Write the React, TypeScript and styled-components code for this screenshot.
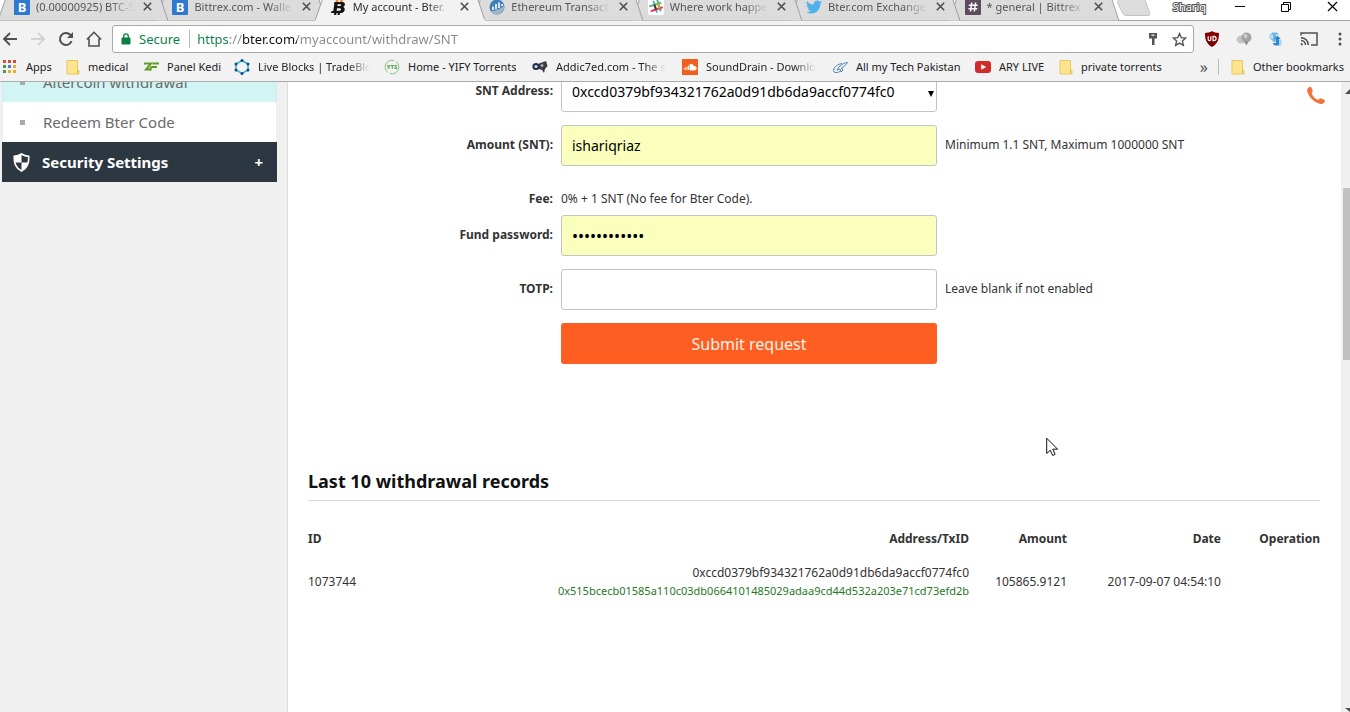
import React from "react";
import styled, { createGlobalStyle, css } from "styled-components";

const GlobalStyle = createGlobalStyle`
  *, *::before, *::after { box-sizing: border-box; }
  html, body, #root { height: 100%; }
  body {
    margin: 0;
    overflow: hidden;
    background: #fff;
    color: #333;
    font-family: "Noto Sans", "Open Sans", sans-serif;
    font-size: 12px;
    line-height: 18px;
  }
  button, input, select { font-family: inherit; margin: 0; }
  a { color: inherit; text-decoration: none; }
  svg { display: block; flex: none; }
`;

const Window = styled.div`
  display: flex;
  flex-direction: column;
  height: 100vh;
  overflow: hidden;
`;

const IconButton = styled.button`
  display: flex;
  align-items: center;
  justify-content: center;
  padding: 0;
  border: 0;
  background: none;
  color: #4d4d4d;
`;

/* ---------- Tab strip ---------- */

const TabStrip = styled.div`
  display: flex;
  flex: none;
  height: 29px;
  margin-top: -8px;
  background: #fff;
  border-bottom: 1px solid #a3a3a3;
  font-size: 11px;
`;

const TabList = styled.div`
  display: flex;
  flex: 0 1 1109px;
  min-width: 0;
`;

const Tab = styled.div<{ $active?: boolean; $order: number }>`
  position: relative;
  z-index: ${(p) => (p.$active ? 20 : p.$order)};
  display: flex;
  flex: 1 1 0;
  min-width: 0;
  height: 29px;
  padding: 0 6px 0 14px;
  align-items: center;
  gap: 6px;
  color: ${(p) => (p.$active ? "#2b2b2b" : "#555")};
`;

const TabShape = styled.svg`
  position: absolute;
  z-index: -1;
  top: 0;
  left: -2px;
  width: calc(100% + 12px);
  height: 29px;
`;

const TabTitle = styled.a`
  flex: 1;
  min-width: 0;
  overflow: hidden;
  white-space: nowrap;
  mask-image: linear-gradient(to right, #000 calc(100% - 24px), transparent);
`;

const TabClose = styled(IconButton)`
  width: 9px;
  height: 9px;
  margin-left: 3px;
`;

const NewTab = styled(IconButton)`
  align-items: flex-start;
  margin: 8px 0 0 8px;
`;

const WindowControls = styled.div`
  display: flex;
  flex: 1;
  justify-content: flex-end;
  align-items: center;
  height: 29px;
  padding-right: 12px;
  color: #000;
`;

const UserName = styled.span`
  margin-right: 28px;
  color: #fff;
  -webkit-text-stroke: 2px #555;
  paint-order: stroke fill;
`;

const ControlButton = styled(IconButton)`
  width: 12px;
  height: 12px;
  color: #000;
  & + & { margin-left: 34px; }
`;

/* ---------- Toolbar ---------- */

const Toolbar = styled.div`
  display: flex;
  flex: none;
  align-items: center;
  height: 32px;
  padding: 4px 4px 0 2px;
  background: #f2f2f2;
`;

const NavButtons = styled.div`
  display: flex;
  gap: 12px;
  width: 110px;
`;

const Omnibox = styled.div`
  display: flex;
  flex: 1;
  align-items: center;
  height: 28px;
  padding: 0 6px 0 8px;
  background: #fff;
  border: 1px solid #a9a9a9;
  border-radius: 3px;
`;

const Secure = styled.span`
  padding: 0 9px 0 8px;
  border-right: 1px solid #bbb;
  font-size: 13px;
  color: #0b8043;
`;

const UrlInput = styled.input`
  flex: 1;
  min-width: 0;
  height: 20px;
  padding: 0;
  margin-left: 7px;
  border: 0;
  outline: 0;
  font-size: 13px;
  color: transparent;
  background: linear-gradient(to right, #0b8043 32px, #888 32px, #888 45px, #111 45px, #111 100px, #888 100px);
  background-clip: text;
  -webkit-background-clip: text;
`;

const OmniActions = styled.div`
  display: flex;
  align-items: center;
  gap: 14px;
`;

const Extensions = styled.div`
  display: flex;
  align-items: center;
  gap: 16px;
  margin-left: 10px;
`;

/* ---------- Bookmarks ---------- */

const BookmarkBar = styled.nav`
  display: flex;
  flex: none;
  align-items: center;
  height: 29px;
  padding-left: 2px;
  padding-right: 6px;
  background: #f2f2f2;
  border-bottom: 1px solid #acacac;
  color: #222;
  font-size: 11px;
`;

const BookmarkList = styled.div`
  display: grid;
  flex: 1;
  grid-template-columns: 64px 77px 91px 150px 148px 150px 150px 143px 84px 1fr;
`;

const Bookmark = styled.a`
  display: flex;
  align-items: center;
  gap: 8px;
  min-width: 0;
`;

const BookmarkLabel = styled.span<{ $fade?: boolean }>`
  overflow: hidden;
  max-width: 112px;
  white-space: nowrap;
  ${(p) => p.$fade && css`mask-image: linear-gradient(to right, #000 calc(100% - 22px), transparent);`}
`;

const BookmarkMore = styled(IconButton)`
  height: 16px;
  width: 20px;
  padding-right: 4px;
  margin-right: 12px;
  box-sizing: content-box;
  border-right: 1px solid #bbb;
  font-size: 16px;
`;

/* ---------- Page ---------- */

const Viewport = styled.div`
  position: relative;
  display: flex;
  flex: 1;
  min-height: 0;
  overflow: hidden;
`;

const Sidebar = styled.aside`
  flex: none;
  width: 288px;
  padding: 0 10px 0 2px;
  background: #f0f0f0;
  border-right: 1px solid #dcdcdc;
`;

const SideMenu = styled.nav`
  margin-top: -20px;
`;

const SideLink = styled.a<{ $current?: boolean }>`
  display: flex;
  align-items: center;
  gap: 18px;
  height: 40px;
  padding-left: 17px;
  border: 1px solid ${(p) => (p.$current ? "#c9eeee" : "#eee")};
  border-width: 0 1px;
  background: ${(p) => (p.$current ? "#d2f4f4" : "#fff")};
  color: #6b6b6b;
  font-size: 15px;

  &::before {
    content: "";
    width: 5px;
    height: 5px;
    background: #a9a9a9;
  }
`;

const SideHeading = styled.button`
  display: flex;
  align-items: center;
  gap: 12px;
  width: 100%;
  height: 40px;
  padding: 0 14px 0 11px;
  border: 0;
  background: #2d3741;
  color: #fff;
  font-size: 15px;
  font-weight: 700;
  text-align: left;
`;

const SideHeadingText = styled.span`
  flex: 1;
`;

const Main = styled.main`
  flex: 1;
  min-width: 0;
  padding: 0 21px 0 20px;
`;

const Form = styled.form`
  margin-top: -11px;
`;

const Row = styled.div<{ $plain?: boolean }>`
  display: grid;
  grid-template-columns: 245px 376px 1fr;
  column-gap: 8px;
  align-items: center;
  min-height: ${(p) => (p.$plain ? 36 : 41)}px;
  padding-top: ${(p) => (p.$plain ? 6 : 0)}px;
  margin-bottom: ${(p) => (p.$plain ? 0 : 13)}px;
`;

const Label = styled.label`
  padding-bottom: 2px;
  text-align: right;
  font-weight: 700;
`;

const Note = styled.span`
  padding-bottom: 2px;
`;

const fieldStyle = css`
  width: 100%;
  height: 41px;
  padding: 0 10px;
  border: 1px solid #c4c4c4;
  border-radius: 3px;
  outline: 0;
  color: #000;
  font-size: 14px;
`;

const Field = styled.input<{ $filled?: boolean }>`
  ${fieldStyle}
  background: ${(p) => (p.$filled ? "#faffbd" : "#fff")};
  &[type="password"] { font-size: 16px; }
`;

const SelectWrap = styled.div`
  position: relative;
`;

const Select = styled.select`
  ${fieldStyle}
  appearance: none;
  background: #fff;
`;

const SelectArrow = styled.svg`
  position: absolute;
  right: 3px;
  top: 20px;
  pointer-events: none;
`;

const SubmitButton = styled.button`
  grid-column: 2;
  height: 41px;
  border: 0;
  border-radius: 3px;
  background: #ff5e22;
  color: #fff3e6;
  font-size: 16px;
`;

const Heading = styled.h2`
  margin: 104px 0 0;
  padding: 0 0 6px;
  border-bottom: 1px solid #d3d8d8;
  color: #111;
  font-size: 18px;
  font-weight: 700;
  line-height: 26px;
`;

const Table = styled.table`
  width: 100%;
  margin-top: 24px;
  table-layout: fixed;
  border-collapse: collapse;
`;

const cell = css<{ $w?: number }>`
  width: ${(p) => (p.$w ? `${p.$w}px` : "auto")};
  padding: 0;
  text-align: right;
  &:first-child { text-align: left; }
`;

const Th = styled.th<{ $w?: number }>`
  ${cell}
  height: 28px;
`;

const Td = styled.td<{ $w?: number }>`
  ${cell}
  height: 58px;
`;

const TxLink = styled.a`
  display: block;
  color: #1f7a1f;
  font-size: 11px;
`;

const PhoneLink = styled.a`
  position: absolute;
  top: 4px;
  right: 24px;
`;

const ScrollTrack = styled.div`
  display: flex;
  flex: none;
  flex-direction: column;
  align-items: flex-end;
  width: 9px;
  padding-top: 7px;
  background: #f0f0f0;
`;

const ScrollThumb = styled.div`
  width: 7px;
  height: 172px;
  margin: 94px 0 auto;
  background: #c1c1c1;
`;

const Pointer = styled.svg`
  position: absolute;
  top: 355px;
  left: 1046px;
`;

/* ---------- Icons ---------- */

const BittrexIcon = () => (
  <svg width="16" height="16" viewBox="0 0 16 16" aria-hidden="true">
    <rect width="16" height="16" rx="1" fill="#2f78cf" />
    <text x="8" y="13" textAnchor="middle" fontSize="13" fontWeight="700" fill="#fff">B</text>
  </svg>
);

const BterIcon = () => (
  <svg width="16" height="16" viewBox="0 0 16 16" aria-hidden="true">
    <path d="M5 0h2.500L7 4H4.500zM9.500 0H12l-.5 4H9z" fill="#f08a24" />
    <path d="M3.500 3H11c3.500 0 3.800 3.700 1.200 4.900C15 9 14 14 9.500 14H9l-.3 2H6.500l.3-2H5.500l-.3 2H3l.3-2H0l.6-2h1.700l1-6.800H2.800zM6.700 5.200l-.3 1.900H9c1.500 0 1.600-1.900.2-1.900zM6 9.300l-.4 2.400h3c1.900 0 2-2.400.3-2.400z" fill="#111" />
  </svg>
);

const EtherscanIcon = () => (
  <svg width="16" height="16" viewBox="0 0 16 16" aria-hidden="true">
    <circle cx="8" cy="8" r="7.500" fill="#3f7fb5" />
    <path d="M1.200 12C6 12.500 11 10 15.400 6.500 15.500 12 12 15.500 8 15.500c-3 0-5.500-1.400-6.800-3.500z" fill="#9fb4c4" />
    <path d="M4 11V7.500M7 10.500V5M10 9V3.500M13 7V5" stroke="#fff" strokeWidth="1.600" />
  </svg>
);

const SlackIcon = () => (
  <svg width="16" height="16" viewBox="0 0 16 16" aria-hidden="true">
    <rect width="16" height="16" rx="2" fill="#fff" />
    <g strokeWidth="2" strokeLinecap="round">
      <path d="M5.500 2.500 8.800 13" stroke="#58b9c4" />
      <path d="M9.500 1.800 12.500 11.500" stroke="#3eb890" />
      <path d="M2 7.300 12.500 4" stroke="#63b48c" />
      <path d="M3.500 12 14 8.500" stroke="#e0405f" />
      <path d="m6.600 6.300 1.200 3.500" stroke="#54303a" />
      <path d="m10 5.300 1.200 3.500" stroke="#e9a820" />
    </g>
  </svg>
);

const TwitterIcon = () => (
  <svg width="16" height="16" viewBox="0 0 24 24" aria-hidden="true">
    <path fill="#4fb0ea" d="M24 4.600a10 10 0 0 1-2.800.8 4.900 4.900 0 0 0 2.100-2.700c-1 .6-2 1-3.100 1.200a4.900 4.900 0 0 0-8.400 4.500A14 14 0 0 1 1.700 3.200a4.900 4.900 0 0 0 1.500 6.500c-.8 0-1.600-.2-2.200-.6v.1a4.900 4.900 0 0 0 3.900 4.800 5 5 0 0 1-2.200.1 4.900 4.900 0 0 0 4.600 3.400A9.900 9.900 0 0 1 0 19.500 14 14 0 0 0 7.500 21.700c9.100 0 14-7.500 14-14v-.6A10 10 0 0 0 24 4.600z" />
  </svg>
);

const HashIcon = () => (
  <svg width="16" height="16" viewBox="0 0 16 16" aria-hidden="true">
    <rect width="16" height="16" rx="1" fill="#5d4b5e" />
    <path d="M6.800 3.500 5.500 12.500M10.600 3.500 9.300 12.500M3.800 6.300h8.800M3.400 9.700h8.800" stroke="#fff" strokeWidth="1.500" />
  </svg>
);

const CloseIcon = ({ size = 9, weight = 1.6 }: { size?: number; weight?: number }) => (
  <svg width={size} height={size} viewBox="0 0 9 9" aria-hidden="true">
    <path d="m.8.8 7.400 7.400M8.200.8.8 8.200" stroke="currentColor" strokeWidth={weight} />
  </svg>
);

const Folder = () => (
  <svg width="14" height="16" viewBox="0 0 14 16" aria-hidden="true">
    <path d="M1 1.500h10.500v10H13V15H1z" fill="#fde58c" stroke="#e7c765" />
    <path d="M11.500 11v3.500" stroke="#d9b855" />
  </svg>
);

const AppsIcon = () => (
  <svg width="16" height="14" viewBox="0 0 16 14" aria-hidden="true">
    {["#d9483b", "#d9483b", "#d9483b", "#3f9b57", "#4a7de0", "#e9ae2c", "#3f9b57", "#e9ae2c", "#e9ae2c"].map((c, i) => (
      <rect key={i} x={1 + (i % 3) * 5} y={Math.floor(i / 3) * 5} width="3" height="3" fill={c} />
    ))}
  </svg>
);

const KediIcon = () => (
  <svg width="16" height="16" viewBox="0 0 16 16" aria-hidden="true">
    <path d="M1 4.500h7L3 10.500h5.500" fill="none" stroke="#5f9e22" strokeWidth="2" />
    <path d="M9.500 4.500H16M8.500 8h5.500M8.300 7.500l-1.300 4" fill="none" stroke="#5f9e22" strokeWidth="2" />
  </svg>
);

const BlocksIcon = () => (
  <svg width="16" height="16" viewBox="0 0 16 16" aria-hidden="true">
    <path d="M8 1.500 14 5v6l-6 3.500L2 11V5z" fill="none" stroke="#35b4d8" strokeWidth="1.500" />
    {[[8, 1.5], [14, 5], [14, 11], [8, 14.5], [2, 11], [2, 5]].map(([x, y]) => (
      <circle key={`${x}-${y}`} cx={x} cy={y} r="1.500" fill="#194a75" />
    ))}
  </svg>
);

const YtsIcon = () => (
  <svg width="16" height="16" viewBox="0 0 16 16" aria-hidden="true">
    <path d="M10 1.500A6.800 6.800 0 0 0 4 13.500M6 14.500A6.800 6.800 0 0 0 12 2.500" fill="none" stroke="#82c67b" />
    <text x="8" y="10" textAnchor="middle" fontSize="6" fontWeight="700" fill="#3f9a3a">YTS</text>
  </svg>
);

const AddictedIcon = () => (
  <svg width="16" height="16" viewBox="0 0 16 16" aria-hidden="true">
    <path d="M7 4.500 14 2l1.500 5L13 10l-1 4-2-3-3-1z" fill="#3c3c44" />
    <circle cx="4" cy="7.500" r="3.600" fill="#1e2c4d" />
    <circle cx="4" cy="7.500" r="1.600" fill="#d4dcec" />
    <circle cx="10" cy="6.500" r="1.500" fill="#aaa" />
  </svg>
);

const SoundDrainIcon = () => (
  <svg width="16" height="16" viewBox="0 0 16 16" aria-hidden="true">
    <rect width="16" height="16" fill="#f0601c" />
    <path d="M8 5.500a3 3 0 0 1 4 2.200 1.700 1.700 0 1 1 .5 3.300H8zM6.500 6.500v4.500M5 7.500V11M3.500 8.200V11M2.200 9v1.500" fill="#fff" stroke="#fff" strokeWidth=".9" />
  </svg>
);

const TechIcon = () => (
  <svg width="16" height="16" viewBox="0 0 16 16" aria-hidden="true">
    <path d="M8 12.500c-4 2-7 1-6.500-1.500C2 8 6 5 10 4.500M5 11c2-4 6-7 10.500-7.500-2 3-4 4.500-6 5.500l1.500 2-2 2-1-3z" fill="none" stroke="#4b86bb" />
  </svg>
);

const YoutubeIcon = () => (
  <svg width="16" height="12" viewBox="0 0 16 12" aria-hidden="true">
    <rect width="16" height="12" rx="3" fill="#d32b2b" />
    <path d="m6.200 3.200 5 2.800-5 2.800z" fill="#fff" />
  </svg>
);

const BackIcon = ({ faded }: { faded?: boolean }) => (
  <svg width="16" height="16" viewBox="0 0 16 16" aria-hidden="true">
    <path
      d={faded ? "M1 8h13M8 2l6 6-6 6" : "M15 8H2M8 2 2 8l6 6"}
      fill="none"
      stroke={faded ? "#d2d2d2" : "#505050"}
      strokeWidth="1.800"
    />
  </svg>
);

const ReloadIcon = () => (
  <svg width="16" height="16" viewBox="0 0 16 16" aria-hidden="true">
    <path d="M13.600 10A6 6 0 1 1 12.300 3.800L14 5.500" fill="none" stroke="#505050" strokeWidth="2" />
    <path d="M15 1v6H9z" fill="#505050" />
  </svg>
);

const HomeIcon = () => (
  <svg width="16" height="16" viewBox="0 0 16 16" aria-hidden="true">
    <path d="M.8 8.500 8 1.300l7.200 7.200M3 7.500V15h10V7.500" fill="none" stroke="#505050" strokeWidth="1.600" />
  </svg>
);

const LockIcon = () => (
  <svg width="10" height="12" viewBox="0 0 10 12" aria-hidden="true">
    <rect x=".5" y="4.500" width="9" height="7" rx="1" fill="#0b8043" />
    <path d="M2.700 5V3.200a2.300 2.300 0 0 1 4.600 0V5" fill="none" stroke="#0b8043" strokeWidth="1.300" />
  </svg>
);

const KeyIcon = () => (
  <svg width="10" height="14" viewBox="0 0 10 14" aria-hidden="true">
    <path d="M1 1h8v5.500H6.500V13h-2.500V6.500H1z" fill="#555" />
    <path d="M3.500 3.200h3" stroke="#fff" strokeWidth="1.200" />
  </svg>
);

const StarIcon = () => (
  <svg width="15" height="15" viewBox="0 0 15 15" aria-hidden="true">
    <path d="m7.500 1.500 1.800 4.100 4.400.4-3.300 3 1 4.400-3.900-2.300-3.900 2.300 1-4.400-3.300-3 4.400-.4z" fill="none" stroke="#505050" strokeWidth="1.300" />
  </svg>
);

const UblockIcon = () => (
  <svg width="16" height="16" viewBox="0 0 16 16" aria-hidden="true">
    <path d="M8 0c2 1.400 4.500 1.900 7 2 0 6-1 10.500-7 14C2 12.500 1 8 1 2c2.500-.1 5-.6 7-2z" fill="#800000" />
    <path d="M4.200 5.300v3.200q0 1.200 1.300 1.200t1.300-1.200V5.300M9 9.600V5.400h.8q2.300 0 2.300 2.100t-2.300 2.100z" fill="none" stroke="#fff" strokeWidth="1.200" />
  </svg>
);

const BalloonIcon = () => (
  <svg width="16" height="16" viewBox="0 0 16 16" aria-hidden="true">
    <ellipse cx="5.500" cy="8.500" rx="5" ry="4" fill="#c4c4c4" />
    <circle cx="10.500" cy="6.500" r="5" fill="#a3a3a3" />
    <circle cx="9.500" cy="5" r="2" fill="#cfcfcf" />
    <path d="m8 10.500 2.500 4 2-4z" fill="#8b8b8b" />
  </svg>
);

const SyncIcon = () => (
  <svg width="16" height="16" viewBox="0 0 16 16" aria-hidden="true">
    <path d="M2 3.500 4.500 1.500H9l2 2H8v4h2l-3.500 4L2.500 8H5V4z" fill="#6db7ea" />
    <path d="M9.500 4.500 13 8h-2v3.500h1.500V13l-2 1.500H6.500l-2-2.500H8V8H6z" fill="#2f86cd" />
    <path d="M1.500 3h3v5h-3zM11 9h2.500v5.500H11z" fill="#a9d5f3" />
  </svg>
);

const CastIcon = () => (
  <svg width="18" height="14" viewBox="0 0 18 14" aria-hidden="true">
    <path d="M1 3.500V1h16v12h-6M1 5.700A7.300 7.300 0 0 1 8.300 13M1 8.400A4.600 4.600 0 0 1 5.600 13" fill="none" stroke="#505050" strokeWidth="1.500" />
    <path d="M.8 10.800A2.300 2.300 0 0 1 3 13.200H.8z" fill="#505050" />
  </svg>
);

const DotsIcon = () => (
  <svg width="12" height="14" viewBox="0 0 12 14" aria-hidden="true">
    <g fill="#505050">
      <circle cx="6" cy="2" r="1.500" />
      <circle cx="6" cy="7" r="1.500" />
      <circle cx="6" cy="12" r="1.500" />
    </g>
  </svg>
);

const ShieldIcon = () => (
  <svg width="17" height="19" viewBox="0 0 17 19" aria-hidden="true">
    <path d="M8.500 1C6.500 2.500 4 3.300 1.200 3.400c0 7 1.300 11.600 7.300 14.600 6-3 7.300-7.600 7.300-14.600C13 3.300 10.500 2.500 8.500 1z" fill="none" stroke="#fff" strokeWidth="1.600" />
    <path d="M8.500 1v8.500H1.600C1.200 7.700 1.200 5.700 1.200 3.400 4 3.300 6.500 2.500 8.500 1zM8.500 9.500h6.900c-.7 4-2.700 6.700-6.900 8.500z" fill="#fff" />
  </svg>
);

/* ---------- Data ---------- */

const tabs = [
  { title: "(0.00000925) BTC-S", icon: <BittrexIcon /> },
  { title: "Bittrex.com - Walle", icon: <BittrexIcon /> },
  { title: "My account - Bter.", icon: <BterIcon />, active: true },
  { title: "Ethereum Transact", icon: <EtherscanIcon /> },
  { title: "Where work happe", icon: <SlackIcon /> },
  { title: "Bter.com Exchange", icon: <TwitterIcon /> },
  { title: "* general | Bittrex S", icon: <HashIcon /> },
];

const bookmarks = [
  { label: "Apps", icon: <AppsIcon /> },
  { label: "medical", icon: <Folder /> },
  { label: "Panel Kedi", icon: <KediIcon /> },
  { label: "Live Blocks | TradeBlo", icon: <BlocksIcon />, fade: true },
  { label: "Home - YIFY Torrents", icon: <YtsIcon /> },
  { label: "Addic7ed.com - The s", icon: <AddictedIcon />, fade: true },
  { label: "SoundDrain - Downlo", icon: <SoundDrainIcon />, fade: true },
  { label: "All my Tech Pakistan", icon: <TechIcon /> },
  { label: "ARY LIVE", icon: <YoutubeIcon /> },
  { label: "private torrents", icon: <Folder /> },
];

const records = [
  {
    id: "1073744",
    address: "0xccd0379bf934321762a0d91db6da9accf0774fc0",
    tx: "0x515bcecb01585a110c03db0664101485029adaa9cd44d532a203e71cd73efd2b",
    amount: "105865.9121",
    date: "2017-09-07 04:54:10",
  },
];

export default function App() {
  return (
    <Window>
      <GlobalStyle />

      <TabStrip>
        <TabList>
          {tabs.map((t, i) => (
            <Tab key={t.title} $active={t.active} $order={tabs.length - i}>
              <TabShape viewBox="0 0 170 29" preserveAspectRatio="none" aria-hidden="true">
                <path
                  d="M0 28.500 10 0H160L169.500 28.500"
                  fill={t.active ? "#f2f2f2" : "#dcdcdc"}
                  stroke="#a3a3a3"
                />
                {t.active && <path d="M.5 28.500h169" stroke="#f2f2f2" strokeWidth="2" />}
              </TabShape>
              {t.icon}
              <TabTitle href="#">{t.title}</TabTitle>
              <TabClose aria-label={`Close ${t.title}`}><CloseIcon /></TabClose>
            </Tab>
          ))}
        </TabList>
        <NewTab aria-label="New tab">
          <svg width="34" height="18" viewBox="0 0 34 18" aria-hidden="true">
            <path d="M-2-2H25q2 0 3 2l5 14q0 1.500-2 1.500H9q-2 0-3-2z" fill="#dcdcdc" stroke="#c2c2c2" />
          </svg>
        </NewTab>
        <WindowControls>
          <UserName>Shariq</UserName>
          <ControlButton aria-label="Minimize">
            <svg width="12" height="12" viewBox="0 0 12 12"><path d="M1 5.500h10" stroke="currentColor" /></svg>
          </ControlButton>
          <ControlButton aria-label="Restore">
            <svg width="12" height="12" viewBox="0 0 12 12" fill="none" stroke="currentColor">
              <path d="M1.500 3.500h7v7h-7zM3.500 3V1.500h7v7H9" />
            </svg>
          </ControlButton>
          <ControlButton aria-label="Close window"><CloseIcon size={11} weight={1} /></ControlButton>
        </WindowControls>
      </TabStrip>

      <Toolbar>
        <NavButtons>
          <IconButton aria-label="Back"><BackIcon /></IconButton>
          <IconButton aria-label="Forward"><BackIcon faded /></IconButton>
          <IconButton aria-label="Reload"><ReloadIcon /></IconButton>
          <IconButton aria-label="Home"><HomeIcon /></IconButton>
        </NavButtons>
        <Omnibox>
          <LockIcon />
          <Secure>Secure</Secure>
          <UrlInput aria-label="Address" defaultValue="https://bter.com/myaccount/withdraw/SNT" />
          <OmniActions>
            <IconButton aria-label="Saved password"><KeyIcon /></IconButton>
            <IconButton aria-label="Bookmark this page"><StarIcon /></IconButton>
          </OmniActions>
        </Omnibox>
        <Extensions>
          <IconButton aria-label="uBlock"><UblockIcon /></IconButton>
          <IconButton aria-label="Proxy"><BalloonIcon /></IconButton>
          <IconButton aria-label="Sync"><SyncIcon /></IconButton>
          <IconButton aria-label="Cast"><CastIcon /></IconButton>
          <IconButton aria-label="Menu"><DotsIcon /></IconButton>
        </Extensions>
      </Toolbar>

      <BookmarkBar>
        <BookmarkList>
          {bookmarks.map((b) => (
            <Bookmark key={b.label} href="#">
              {b.icon}
              <BookmarkLabel $fade={b.fade}>{b.label}</BookmarkLabel>
            </Bookmark>
          ))}
        </BookmarkList>
        <BookmarkMore aria-label="More bookmarks">»</BookmarkMore>
        <Bookmark href="#">
          <Folder />
          <BookmarkLabel>Other bookmarks</BookmarkLabel>
        </Bookmark>
      </BookmarkBar>

      <Viewport>
        <Sidebar>
          <SideMenu>
            <SideLink href="#" $current>Altercoin withdrawal</SideLink>
            <SideLink href="#">Redeem Bter Code</SideLink>
            <SideHeading>
              <ShieldIcon />
              <SideHeadingText>Security Settings</SideHeadingText>
              <span>+</span>
            </SideHeading>
          </SideMenu>
        </Sidebar>

        <Main>
          <Form onSubmit={(e) => e.preventDefault()}>
            <Row>
              <Label htmlFor="address">SNT Address:</Label>
              <SelectWrap>
                <Select id="address">
                  <option>0xccd0379bf934321762a0d91db6da9accf0774fc0</option>
                </Select>
                <SelectArrow width="6" height="6" viewBox="0 0 6 6" aria-hidden="true">
                  <path d="M0 0h6L3 6z" fill="#000" />
                </SelectArrow>
              </SelectWrap>
            </Row>
            <Row>
              <Label htmlFor="amount">Amount (SNT):</Label>
              <Field id="amount" $filled defaultValue="ishariqriaz" />
              <Note>Minimum 1.1 SNT, Maximum 1000000 SNT</Note>
            </Row>
            <Row $plain>
              <Label as="span">Fee:</Label>
              <Note>0% + 1 SNT (No fee for Bter Code).</Note>
            </Row>
            <Row>
              <Label htmlFor="password">Fund password:</Label>
              <Field id="password" type="password" $filled defaultValue="abcdefghijkl" />
            </Row>
            <Row>
              <Label htmlFor="totp">TOTP:</Label>
              <Field id="totp" />
              <Note>Leave blank if not enabled</Note>
            </Row>
            <Row>
              <SubmitButton type="submit">Submit request</SubmitButton>
            </Row>
          </Form>

          <Heading>Last 10 withdrawal records</Heading>
          <Table>
            <thead>
              <tr>
                <Th $w={100}>ID</Th>
                <Th>Address/TxID</Th>
                <Th $w={98}>Amount</Th>
                <Th $w={154}>Date</Th>
                <Th $w={99}>Operation</Th>
              </tr>
            </thead>
            <tbody>
              {records.map((r) => (
                <tr key={r.id}>
                  <Td>{r.id}</Td>
                  <Td>
                    {r.address}
                    <TxLink href="#">{r.tx}</TxLink>
                  </Td>
                  <Td>{r.amount}</Td>
                  <Td>{r.date}</Td>
                  <Td />
                </tr>
              ))}
            </tbody>
          </Table>
        </Main>

        <ScrollTrack aria-hidden="true">
          <svg width="5" height="5" viewBox="0 0 5 5"><path d="M0 5 5 0v5z" fill="#505050" /></svg>
          <ScrollThumb />
          <svg width="5" height="4" viewBox="0 0 5 4"><path d="M0 0h5v4z" fill="#505050" /></svg>
        </ScrollTrack>

        <PhoneLink href="#" aria-label="Call support">
          <svg width="20" height="20" viewBox="0 0 20 20" aria-hidden="true">
            <path d="M2.500 1.600C3.800.4 5 .6 5.600 2l1 2.400c.4 1 0 1.800-1 2.500C6.200 9.800 9.500 13 12.600 13.800c.6-1.300 1.400-1.800 2.500-1.400l2.600 1.100c1.400.6 1.600 1.700.6 3-1 1.300-2.600 1.800-4.500 1.300C8 16.300 2.900 11.200 1.400 5.700.9 4 1.300 2.700 2.500 1.600z" fill="#f4703d" />
          </svg>
        </PhoneLink>

        <Pointer width="13" height="20" viewBox="0 0 13 20" aria-hidden="true">
          <path d="M.7 1.200v15.300l3.600-3.300 2.300 5.300 2.500-1.100-2.300-5.200h4.800z" fill="#fff" stroke="#111" />
        </Pointer>
      </Viewport>
    </Window>
  );
}
